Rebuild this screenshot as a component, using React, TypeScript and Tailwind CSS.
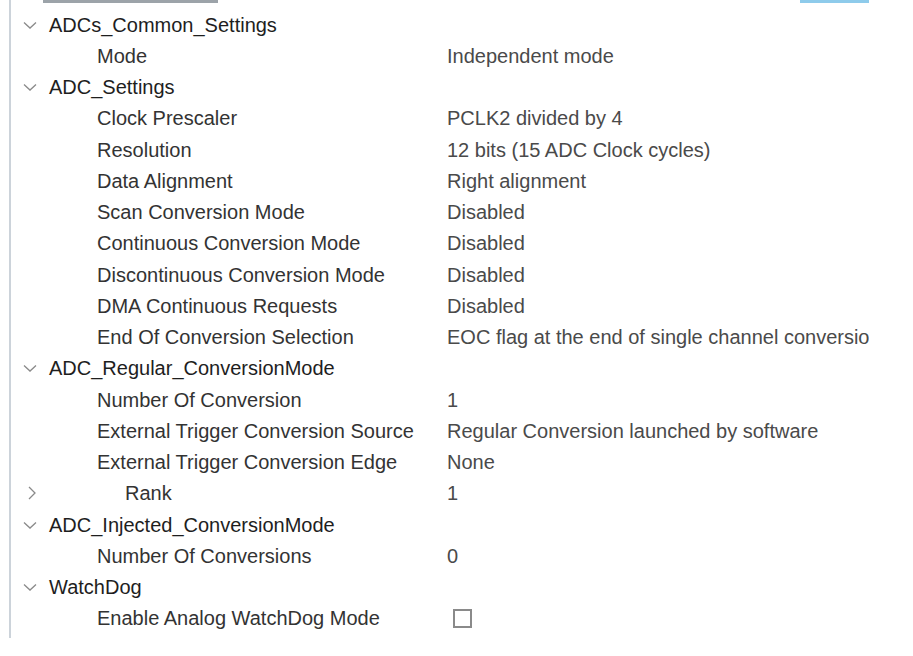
import React from "react";

type Row =
  | { kind: "group"; label: string }
  | { kind: "item"; label: string; value?: string; checkbox?: boolean; collapsed?: boolean };

const rows: Row[] = [
  { kind: "group", label: "ADCs_Common_Settings" },
  { kind: "item", label: "Mode", value: "Independent mode" },
  { kind: "group", label: "ADC_Settings" },
  { kind: "item", label: "Clock Prescaler", value: "PCLK2 divided by 4" },
  { kind: "item", label: "Resolution", value: "12 bits (15 ADC Clock cycles)" },
  { kind: "item", label: "Data Alignment", value: "Right alignment" },
  { kind: "item", label: "Scan Conversion Mode", value: "Disabled" },
  { kind: "item", label: "Continuous Conversion Mode", value: "Disabled" },
  { kind: "item", label: "Discontinuous Conversion Mode", value: "Disabled" },
  { kind: "item", label: "DMA Continuous Requests", value: "Disabled" },
  { kind: "item", label: "End Of Conversion Selection", value: "EOC flag at the end of single channel conversion" },
  { kind: "group", label: "ADC_Regular_ConversionMode" },
  { kind: "item", label: "Number Of Conversion", value: "1" },
  { kind: "item", label: "External Trigger Conversion Source", value: "Regular Conversion launched by software" },
  { kind: "item", label: "External Trigger Conversion Edge", value: "None" },
  { kind: "item", label: "Rank", value: "1", collapsed: true },
  { kind: "group", label: "ADC_Injected_ConversionMode" },
  { kind: "item", label: "Number Of Conversions", value: "0" },
  { kind: "group", label: "WatchDog" },
  { kind: "item", label: "Enable Analog WatchDog Mode", checkbox: true },
];

function ChevronDown() {
  return (
    <svg width="14" height="14" viewBox="0 0 14 14" className="shrink-0">
      <path d="M1 4.5 L7 10 L13 4.5" fill="none" stroke="#8a8a8a" strokeWidth="1.3" />
    </svg>
  );
}

function ChevronRight() {
  return (
    <svg width="14" height="14" viewBox="0 0 14 14" className="shrink-0">
      <path d="M4 1 L10 7 L4 13" fill="none" stroke="#8a8a8a" strokeWidth="1.3" />
    </svg>
  );
}

export default function App() {
  return (
    <div
      className="relative w-[913px] h-[656px] bg-white overflow-hidden"
      style={{ fontFamily: '"Liberation Sans", Arial, sans-serif' }}
    >
      <div className="absolute left-[43px] top-0 w-[175px] h-[3px] bg-[#9ca3a9]" />
      <div className="absolute left-[800px] top-0 w-[69px] h-[3px] bg-[#8ecbeb]" />
      <div className="flex pl-[9px]">
        <div className="w-[2px] h-[638px] bg-[#ccd3da]" />
        <div className="flex flex-col pt-[9px] w-[858px]">
          {rows.map((r, i) =>
            r.kind === "group" ? (
              <div key={i} className="flex items-center h-[31.25px] whitespace-nowrap">
                <div className="w-[12px]" />
                <ChevronDown />
                <span className="ml-[12px] text-[20px] text-[#1e1e1e]">{r.label}</span>
              </div>
            ) : (
              <div key={i} className="flex items-center h-[31.25px] whitespace-nowrap overflow-hidden">
                {r.collapsed ? (
                  <>
                    <div className="w-[14px]" />
                    <ChevronRight />
                    <span className="ml-[86px] w-[322px] text-[20px] text-[#333333]">{r.label}</span>
                  </>
                ) : (
                  <span className="ml-[86px] w-[350px] text-[20px] text-[#333333]">{r.label}</span>
                )}
                {r.checkbox ? (
                  <div className="ml-[6px] w-[19px] h-[19px] border-2 border-[#8a8a8a] bg-white" />
                ) : (
                  <span className="text-[20px] text-[#4a4a4a] overflow-hidden w-[422px]">{r.value}</span>
                )}
              </div>
            )
          )}
        </div>
      </div>
    </div>
  );
}
